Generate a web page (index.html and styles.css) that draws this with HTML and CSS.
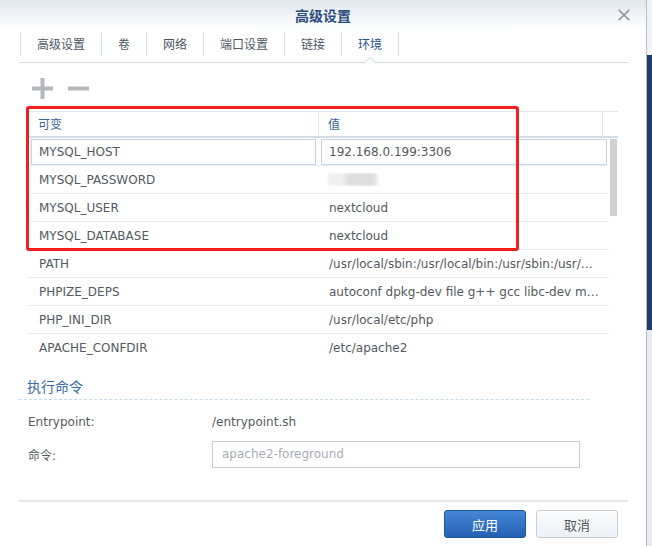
FILE: index.html
```html
<!DOCTYPE html>
<html lang="zh-CN">
<head>
<meta charset="utf-8">
<title>高级设置</title>
<link rel="stylesheet" href="styles.css">
</head>
<body>
<div class="screen">
  <div class="window">
    <header class="titlebar">
      <span></span>
      <h1 class="title">高级设置</h1>
      <button class="close" aria-label="关闭">
        <svg width="12" height="12" viewBox="0 0 12 12"><path d="M0.8 0.8L11.2 11.2M11.2 0.8L0.8 11.2" stroke="#9c9c9c" stroke-width="1.7" fill="none"/></svg>
      </button>
    </header>
    <nav class="tabs">
      <span class="tab">高级设置</span>
      <span class="tab">卷</span>
      <span class="tab">网络</span>
      <span class="tab">端口设置</span>
      <span class="tab">链接</span>
      <span class="tab active">环境</span>
    </nav>
    <main class="panel">
      <div class="toolbar">
        <svg class="tool" width="21" height="21" viewBox="0 0 21 21"><path d="M0 8.5H21V12.5H0Z M8.5 0H12.5V21H8.5Z" fill="#b4b8bd"/></svg>
        <svg class="tool" width="21" height="21" viewBox="0 0 21 21"><path d="M0 8.5H21V12.5H0Z" fill="#b4b8bd"/></svg>
      </div>
      <div class="grid-wrap">
        <div class="grid">
          <div class="grid-head">
            <div class="hcell c1">可变</div>
            <div class="hcell c2">值</div>
            <div class="hcell c3"></div>
          </div>
          <div class="grid-body">
            <div class="rows">
              <div class="row editing">
                <div class="cell c1"><span class="edit">MYSQL_HOST</span></div>
                <div class="cell c2"><span class="edit">192.168.0.199:3306</span></div>
              </div>
              <div class="row">
                <div class="cell c1">MYSQL_PASSWORD</div>
                <div class="cell c2"><span class="masked"></span></div>
              </div>
              <div class="row">
                <div class="cell c1">MYSQL_USER</div>
                <div class="cell c2">nextcloud</div>
              </div>
              <div class="row">
                <div class="cell c1">MYSQL_DATABASE</div>
                <div class="cell c2">nextcloud</div>
              </div>
              <div class="row">
                <div class="cell c1">PATH</div>
                <div class="cell c2">/usr/local/sbin:/usr/local/bin:/usr/sbin:/usr/bin:/sbin:/bin</div>
              </div>
              <div class="row">
                <div class="cell c1">PHPIZE_DEPS</div>
                <div class="cell c2">autoconf dpkg-dev file g++ gcc libc-dev make pkg-config re2c</div>
              </div>
              <div class="row">
                <div class="cell c1">PHP_INI_DIR</div>
                <div class="cell c2">/usr/local/etc/php</div>
              </div>
              <div class="row last">
                <div class="cell c1">APACHE_CONFDIR</div>
                <div class="cell c2">/etc/apache2</div>
              </div>
            </div>
            <div class="scrollbar"><div class="thumb"></div></div>
          </div>
        </div>
        <div class="highlight"></div>
      </div>
      <section class="cmd">
        <h2 class="cmd-title">执行命令</h2>
        <div class="form-row first">
          <span class="label">Entrypoint:</span>
          <span class="value">/entrypoint.sh</span>
        </div>
        <div class="form-row">
          <span class="label">命令:</span>
          <input class="text-input" type="text" placeholder="apache2-foreground">
        </div>
      </section>
    </main>
    <footer class="footer">
      <button class="btn primary">应用</button>
      <button class="btn">取消</button>
    </footer>
  </div>
  <div class="desk"></div>
</div>
</body>
</html>
```
FILE: styles.css
```css
* {
  box-sizing: border-box;
  margin: 0;
  padding: 0;
}

html, body {
  width: 652px;
  height: 546px;
  overflow: hidden;
}

body {
  font-family: "DejaVu Sans", "Noto Sans CJK SC", sans-serif;
  font-size: 12px;
  color: #555b62;
  background: #ffffff;
}

.screen {
  display: flex;
  width: 652px;
  height: 546px;
}

.window {
  width: 647px;
  height: 546px;
  flex: none;
  display: flex;
  flex-direction: column;
  background: #ffffff;
  border-right: 1px solid #b9bec5;
}

.desk {
  flex: 1;
  background: linear-gradient(to bottom, #f2f3f5 0, #f2f3f5 55px, #1d3d6e 55px, #1d3d6e 330px, #e9ebee 330px);
}

/* title bar */
.titlebar {
  height: 30px;
  flex: none;
  display: grid;
  grid-template-columns: 1fr auto 1fr;
  align-items: center;
  background: linear-gradient(to bottom, #e1e7ef 0%, #f3f5f8 60%, #ffffff 100%);
}

.title {
  font-family: "Noto Sans CJK SC", sans-serif;
  font-size: 14px;
  font-weight: 700;
  color: #2b4d7c;
  line-height: 20px;
}

.close {
  justify-self: end;
  margin-right: 16px;
  width: 12px;
  height: 12px;
  border: 0;
  background: none;
  display: flex;
}

/* tabs */
.tabs {
  height: 33px;
  flex: none;
  margin: 0 18px 0 19px;
  padding: 2px 0 0 1px;
  display: flex;
  align-items: flex-start;
  border-bottom: 1px solid #d7dbe0;
}

.tab {
  position: relative;
  height: 24px;
  line-height: 24px;
  padding: 0 16px;
  border-left: 1px solid #d6dee7;
  font-family: "Noto Sans CJK SC", sans-serif;
  font-size: 12px;
  color: #4d5864;
}

.tab:last-child {
  border-right: 1px solid #d6dee7;
}

.tab.active {
  color: #24528c;
}

.tab.active::before,
.tab.active::after {
  content: "";
  position: absolute;
  left: 50%;
  width: 0;
  height: 0;
  border-style: solid;
  border-color: transparent;
}

.tab.active::before {
  bottom: -7px;
  margin-left: -6px;
  border-width: 0 6px 6px 6px;
  border-bottom-color: #d2d7dd;
}

.tab.active::after {
  bottom: -7px;
  margin-left: -5px;
  border-width: 0 5px 5px 5px;
  border-bottom-color: #ffffff;
}

/* panel */
.panel {
  flex: none;
  padding: 0 18px 0 19px;
}

.toolbar {
  height: 48px;
  display: flex;
  align-items: flex-start;
  gap: 15px;
  padding: 15px 0 0 13px;
}

.tool {
  display: block;
}

.grid-wrap {
  position: relative;
  margin-left: 9px;
  width: 590px;
}

.grid-head {
  display: flex;
  height: 27px;
  border-top: 1px solid #dfe6ee;
  border-left: 1px solid #e3e9f0;
  border-bottom: 2px solid #d3dee9;
}

.hcell {
  line-height: 24px;
  font-family: "Noto Sans CJK SC", sans-serif;
  font-size: 12px;
  color: #3a6598;
  border-right: 1px solid #e0e7ef;
}

.hcell.c1 {
  width: 290px;
  padding-left: 9px;
}

.hcell.c2 {
  width: 284px;
  padding-left: 9px;
}

.hcell.c3 {
  flex: 1;
  border-right: 0;
}

.grid-body {
  display: flex;
  height: 224px;
}

.rows {
  width: 581px;
}

.row {
  display: flex;
  height: 28px;
  align-items: center;
  border-bottom: 1px solid #e9edf2;
}

.row.last {
  border-bottom: 0;
}

.cell {
  white-space: nowrap;
  overflow: hidden;
  text-overflow: ellipsis;
  color: #545a61;
}

.cell.c1 {
  width: 291px;
  padding: 0 11px;
}

.cell.c2 {
  width: 290px;
  padding: 0 10px;
}

.row.editing .cell.c1 {
  padding: 0 3px;
}

.row.editing .cell.c2 {
  padding: 0 2px;
}

.edit {
  display: block;
  height: 26px;
  line-height: 24px;
  padding-left: 7px;
  border: 1px solid #c7d4e3;
  background: #ffffff;
}

.masked {
  display: block;
  width: 50px;
  height: 13px;
  margin-left: -1px;
  background: linear-gradient(to right, #f0f0f0 0, #f0f0f0 30%, #dedede 40%, #dcdcdc 90%, #f3f3f3 100%);
  filter: blur(1.5px);
}

.scrollbar {
  width: 9px;
  padding: 1px 1px 0 1px;
}

.thumb {
  width: 7px;
  height: 77px;
  background: #d0d0d0;
}

.highlight {
  position: absolute;
  left: -2px;
  top: -5px;
  width: 493px;
  height: 145px;
  border: 3px solid #f41e1e;
  border-radius: 3px;
  pointer-events: none;
}

/* command section */
.cmd {
  padding-top: 14px;
}

.cmd-title {
  width: 570px;
  padding: 0 0 3px 8px;
  font-family: "Noto Sans CJK SC", sans-serif;
  font-size: 14px;
  font-weight: 400;
  line-height: 20px;
  color: #3a6ca3;
  border-bottom: 1px dashed #c5daec;
}

.form-row {
  display: flex;
  align-items: center;
  height: 28px;
  margin-top: 4px;
}

.form-row.first {
  margin-top: 8px;
}

.label {
  width: 193px;
  padding-left: 9px;
  color: #555b62;
}

.value {
  color: #555b62;
}

.text-input {
  width: 368px;
  height: 27px;
  padding-left: 9px;
  border: 1px solid #c6d0db;
  font-family: "DejaVu Sans", sans-serif;
  font-size: 12px;
  color: #555b62;
  outline: none;
}

.text-input::placeholder {
  color: #a7aeb6;
}

/* footer */
.footer {
  margin: auto 18px 0 19px;
  height: 46px;
  flex: none;
  display: flex;
  justify-content: flex-end;
  align-items: flex-start;
  gap: 10px;
  padding: 8px 10px 0 0;
  border-top: 2px solid #e6e6e6;
}

.btn {
  width: 82px;
  height: 28px;
  border-radius: 3px;
  font-family: "Noto Sans CJK SC", sans-serif;
  font-size: 13px;
  color: #4f5863;
  border: 1px solid #c6ced8;
  background: linear-gradient(to bottom, #fbfcfd, #edf1f5);
}

.btn.primary {
  color: #ffffff;
  border-color: #1f56a0;
  background: linear-gradient(to bottom, #4587d6, #2461b2);
}
```
